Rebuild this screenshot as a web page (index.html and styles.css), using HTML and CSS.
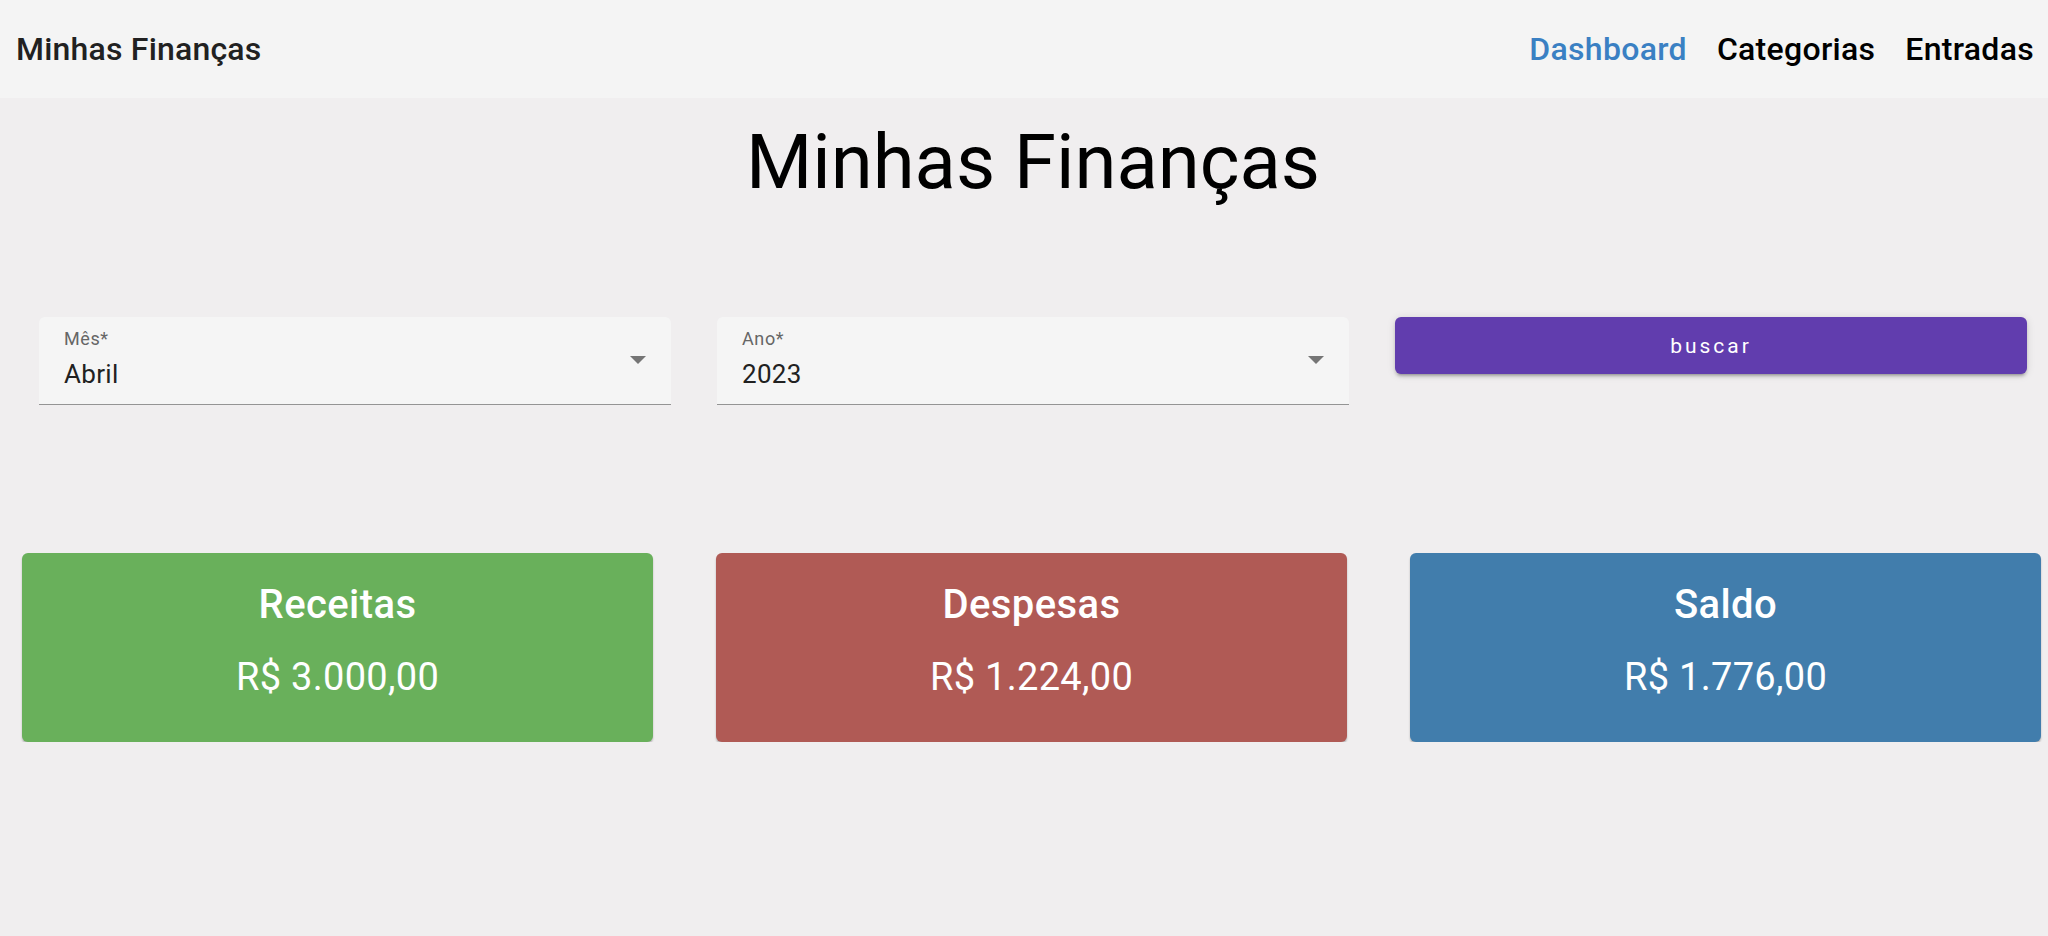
FILE: index.html
```html
<!DOCTYPE html>
<html lang="pt-BR">
<head>
  <meta charset="UTF-8">
  <title>Minhas Finanças</title>
  <meta name="viewport" content="width=device-width, initial-scale=1">
  <link rel="stylesheet" href="styles.css">
</head>
<body>
  <header class="topbar">
    <span class="brand">Minhas Finanças</span>
    <nav class="menu">
      <a href="#" class="active">Dashboard</a>
      <a href="#">Categorias</a>
      <a href="#">Entradas</a>
    </nav>
  </header>

  <main>
    <h1 class="title">Minhas Finanças</h1>

    <div class="filters">
      <div class="field">
        <div class="field-body">
          <span class="field-label">Mês*</span>
          <span class="field-value">Abril</span>
        </div>
        <span class="caret"></span>
      </div>

      <div class="field">
        <div class="field-body">
          <span class="field-label">Ano*</span>
          <span class="field-value">2023</span>
        </div>
        <span class="caret"></span>
      </div>

      <div class="action">
        <button class="search">buscar</button>
      </div>
    </div>

    <div class="cards">
      <div class="card income">
        <div class="card-title">Receitas</div>
        <div class="card-value">R$ 3.000,00</div>
      </div>
      <div class="card expense">
        <div class="card-title">Despesas</div>
        <div class="card-value">R$ 1.224,00</div>
      </div>
      <div class="card balance">
        <div class="card-title">Saldo</div>
        <div class="card-value">R$ 1.776,00</div>
      </div>
    </div>
  </main>
</body>
</html>
```

FILE: styles.css
```css
body {
  margin: 0;
  font-family: Roboto, "Liberation Sans", sans-serif;
  background-color: #f0eeef;
  color: #000;
}

.topbar {
  height: 98px;
  display: flex;
  align-items: center;
  justify-content: space-between;
  padding: 0 14px 0 16px;
  background-color: #f4f4f4;
}

.brand {
  font-size: 32px;
  font-weight: 500;
  letter-spacing: 0.2px;
  color: #212121;
}

.menu {
  display: flex;
  gap: 30px;
}

.menu a {
  font-size: 32px;
  font-weight: 500;
  letter-spacing: 0.3px;
  color: #000;
  text-decoration: none;
}

.menu a.active {
  color: #3a80c3;
}

.title {
  margin: 18px 0 0;
  padding: 0 21px 0 39px;
  font-size: 76px;
  line-height: 1.23;
  font-weight: 400;
  text-align: center;
}

.filters {
  display: grid;
  grid-template-columns: repeat(3, 1fr);
  gap: 46px;
  padding: 0 21px 0 39px;
  margin-top: 108px;
}

.field {
  height: 88px;
  box-sizing: border-box;
  display: flex;
  align-items: center;
  padding: 0 25px;
  background-color: #f5f5f5;
  border-radius: 6px 6px 0 0;
  border-bottom: 1.5px solid #949494;
}

.field-body {
  flex: 1;
  display: flex;
  flex-direction: column;
  align-self: flex-start;
  padding-top: 10px;
}

.field-label {
  font-size: 18px;
  line-height: 24px;
  color: #666;
  letter-spacing: 0.6px;
}

.field-value {
  margin-top: 7px;
  font-size: 26px;
  line-height: 32px;
  color: #212121;
  letter-spacing: 0.3px;
}

.caret {
  width: 0;
  height: 0;
  border-left: 8px solid transparent;
  border-right: 8px solid transparent;
  border-top: 8px solid #757575;
  margin-top: -2px;
}

.search {
  width: 100%;
  height: 57px;
  border: none;
  border-radius: 6px;
  background-color: #613dae;
  color: #fff;
  font-family: Roboto, "Liberation Sans", sans-serif;
  font-size: 21px;
  font-weight: 400;
  letter-spacing: 3px;
  cursor: pointer;
  box-shadow: 0 4px 2px -3px rgba(0,0,0,0.2), 0 3px 3px rgba(0,0,0,0.14), 0 1px 8px rgba(0,0,0,0.12);
}

.cards {
  display: grid;
  grid-template-columns: repeat(3, 1fr);
  gap: 63px;
  padding: 0 7px 0 22px;
  margin-top: 148px;
}

.card {
  height: 189px;
  box-sizing: border-box;
  padding-top: 28px;
  border-radius: 6px;
  color: #fff;
  text-align: center;
  box-shadow: 0 2px 2px rgba(0,0,0,0.25);
}

.card-title {
  font-size: 40px;
  line-height: 48px;
  font-weight: 500;
  letter-spacing: 0.4px;
}

.card-value {
  margin-top: 26px;
  font-size: 38px;
  line-height: 45px;
  letter-spacing: 0.3px;
}

.income {
  background-color: #69b05b;
}

.expense {
  background-color: #b05a55;
}

.balance {
  background-color: #417dac;
}
```
